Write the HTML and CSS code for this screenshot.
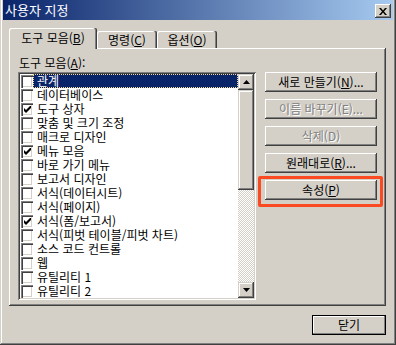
FILE: index.html
```html
<!DOCTYPE html>
<html lang="ko">
<head>
    <meta charset="UTF-8">
    <title>사용자 지정</title>
    <link rel="stylesheet" href="styles.css">
</head>
<body>
    <div class="window">
        <div class="titlebar">
            <span class="title">사용자 지정</span>
            <button class="caption-btn" aria-label="닫기">
                <svg width="8" height="7" viewBox="0 0 8 7"><path d="M0 0h2l2 2.5 2-2.5h2L5 3.5 8 7H6L4 4.5 2 7H0l3-3.5z" fill="#000"/></svg>
            </button>
        </div>
        <div class="content">
            <div class="tabs">
                <div class="tab active">도구 모음(<u>B</u>)</div>
                <div class="tab">명령(<u>C</u>)</div>
                <div class="tab">옵션(<u>O</u>)</div>
            </div>
            <div class="panel">
                <div class="list-col">
                    <div class="field-label">도구 모음(<u>A</u>):</div>
                    <div class="listbox">
                        <ul class="items" id="items"></ul>
                        <div class="scrollbar">
                            <div class="sb-btn">
                                <svg width="7" height="4" viewBox="0 0 7 4"><path d="M3.5 0L7 4H0z" fill="#000"/></svg>
                            </div>
                            <div class="sb-thumb"></div>
                            <div class="sb-track"></div>
                            <div class="sb-btn">
                                <svg width="7" height="4" viewBox="0 0 7 4"><path d="M0 0h7L3.5 4z" fill="#000"/></svg>
                            </div>
                        </div>
                    </div>
                </div>
                <div class="btn-col">
                    <button class="btn">새로 만들기(<u>N</u>)...</button>
                    <button class="btn" disabled>이름 바꾸기(E)...</button>
                    <button class="btn" disabled>삭제(D)</button>
                    <button class="btn">원래대로(<u>R</u>)...</button>
                    <button class="btn">속성(<u>P</u>)</button>
                    <div class="mark"></div>
                </div>
            </div>
            <div class="footer">
                <button class="btn default">닫기</button>
            </div>
        </div>
    </div>

    <script>
        const toolbars = [
            { name: '관계', checked: false, selected: true },
            { name: '데이터베이스', checked: false },
            { name: '도구 상자', checked: true },
            { name: '맞춤 및 크기 조정', checked: false },
            { name: '매크로 디자인', checked: false },
            { name: '메뉴 모음', checked: true },
            { name: '바로 가기 메뉴', checked: false },
            { name: '보고서 디자인', checked: false },
            { name: '서식(데이터시트)', checked: false },
            { name: '서식(페이지)', checked: false },
            { name: '서식(폼/보고서)', checked: true },
            { name: '서식(피벗 테이블/피벗 차트)', checked: false },
            { name: '소스 코드 컨트롤', checked: false },
            { name: '웹', checked: false },
            { name: '유틸리티 1', checked: false },
            { name: '유틸리티 2', checked: false }
        ];

        const list = document.getElementById('items');
        toolbars.forEach(tb => {
            const li = document.createElement('li');
            li.className = 'item';
            const box = document.createElement('span');
            box.className = 'check';
            if (tb.checked) {
                box.innerHTML = '<svg width="7" height="7" viewBox="0 0 7 7"><path d="M0 2l2 2 5-5v3L2 7 0 5z" fill="#000"/></svg>';
            }
            const text = document.createElement('span');
            text.className = tb.selected ? 'item-text selected' : 'item-text';
            text.textContent = tb.name;
            li.appendChild(box);
            li.appendChild(text);
            list.appendChild(li);
        });
    </script>
</body>
</html>
```

FILE: styles.css
```css
* {
    box-sizing: border-box;
}
body {
    margin: 0;
    background-color: #d4d0c8;
    font-family: "Noto Sans CJK KR", "Noto Sans", sans-serif;
    font-size: 12px;
    color: #000;
}
u {
    text-decoration-thickness: 1px;
    text-underline-offset: 1px;
}
.window {
    width: 396px;
    height: 345px;
    padding: 0 3px 3px 3px;
    display: flex;
    flex-direction: column;
    box-shadow: inset -1px -1px #404040, inset 1px 0 0 #d4d0c8, inset -2px -2px #808080, inset 2px 0 0 #fff;
}
.titlebar {
    height: 20px;
    padding: 0 2px 0 2px;
    display: flex;
    align-items: center;
    justify-content: space-between;
    background: linear-gradient(to right, #0a246a, #a6caf0);
    color: white;
}
.title {
    font-size: 13px;
    line-height: 20px;
}
.caption-btn {
    width: 16px;
    height: 14px;
    margin-top: 2px;
    padding: 0;
    border: none;
    background-color: #d4d0c8;
    display: flex;
    align-items: center;
    justify-content: center;
    box-shadow: inset -1px -1px #404040, inset 1px 1px #fff, inset -2px -2px #808080, inset 2px 2px #d4d0c8;
}
.content {
    flex: 1;
    padding: 8px 7px 0 6px;
    display: flex;
    flex-direction: column;
}

/* tabs */
.tabs {
    height: 20px;
    display: flex;
    align-items: flex-end;
    position: relative;
    z-index: 1;
}
.tab {
    width: 60px;
    height: 17px;
    line-height: 17px;
    text-align: center;
    background-color: #d4d0c8;
    border-radius: 2px 2px 0 0;
    box-shadow: inset -1px 0 0 #404040, inset -2px 0 0 #808080, inset 1px 1px 0 #fff;
    white-space: nowrap;
}
.tab.active {
    width: 88px;
    height: 21px;
    margin-bottom: -1px;
    line-height: 19px;
}
.panel {
    height: 258px;
    padding: 8px 0 0 9px;
    display: flex;
    box-shadow: inset -1px -1px #404040, inset 1px 1px #fff, inset -2px -2px #808080;
}

/* toolbar list */
.list-col {
    width: 238px;
}
.field-label {
    height: 14px;
    line-height: 14px;
    margin: 0 0 2px 1px;
}
.listbox {
    height: 228px;
    padding: 2px;
    display: flex;
    background: white;
    box-shadow: inset 1px 1px #808080, inset -1px -1px #fff, inset 2px 2px #404040, inset -2px -2px #d4d0c8;
}
.items {
    flex: 1;
    margin: 0;
    padding: 0;
    list-style: none;
    overflow: hidden;
}
.item {
    height: 14px;
    padding-left: 1px;
    display: flex;
    align-items: center;
}
.check {
    width: 12px;
    height: 13px;
    flex: none;
    display: flex;
    align-items: center;
    justify-content: center;
    background: white;
    box-shadow: inset 1px 1px #808080, inset 2px 2px #404040, inset -1px -1px #fff, inset -2px -2px #d4d0c8;
}
.item-text {
    flex: 1;
    height: 14px;
    padding-left: 4px;
    line-height: 14px;
    white-space: nowrap;
}
.item-text.selected {
    background-color: #0a246a;
    color: white;
    outline: 1px dotted #f5db95;
    outline-offset: -1px;
}
.scrollbar {
    width: 16px;
    display: flex;
    flex-direction: column;
}
.sb-btn,
.sb-thumb {
    background-color: #d4d0c8;
    box-shadow: inset -1px -1px #404040, inset 1px 1px #d4d0c8, inset -2px -2px #808080, inset 2px 2px #fff;
}
.sb-btn {
    height: 16px;
    display: flex;
    align-items: center;
    justify-content: center;
}
.sb-thumb {
    height: 100px;
}
.sb-track {
    flex: 1;
    background-color: #fff;
    background-image: conic-gradient(#d4d0c8 25%, #fff 0 50%, #d4d0c8 0 75%, #fff 0);
    background-size: 2px 2px;
}

/* command buttons */
.btn-col {
    width: 112px;
    margin: 16px 0 0 9px;
    display: flex;
    flex-direction: column;
    gap: 7px;
    position: relative;
}
.btn {
    height: 20px;
    padding: 0;
    border: none;
    font: inherit;
    line-height: 18px;
    color: #000;
    background-color: #d4d0c8;
    box-shadow: inset -1px -1px #404040, inset 1px 1px #fff, inset -2px -2px #808080, inset 2px 2px #d4d0c8;
    white-space: nowrap;
}
.btn:disabled {
    color: #808080;
    text-shadow: 1px 1px #fff;
}
.mark {
    position: absolute;
    left: -7px;
    top: 104px;
    width: 125px;
    height: 31px;
    border: 3px solid #fb4a22;
    border-radius: 2px;
}
.footer {
    margin-top: 9px;
    display: flex;
    justify-content: flex-end;
}
.btn.default {
    width: 74px;
    box-shadow: inset 0 0 0 1px #000, inset -2px -2px #808080, inset 2px 2px #fff;
}
```
